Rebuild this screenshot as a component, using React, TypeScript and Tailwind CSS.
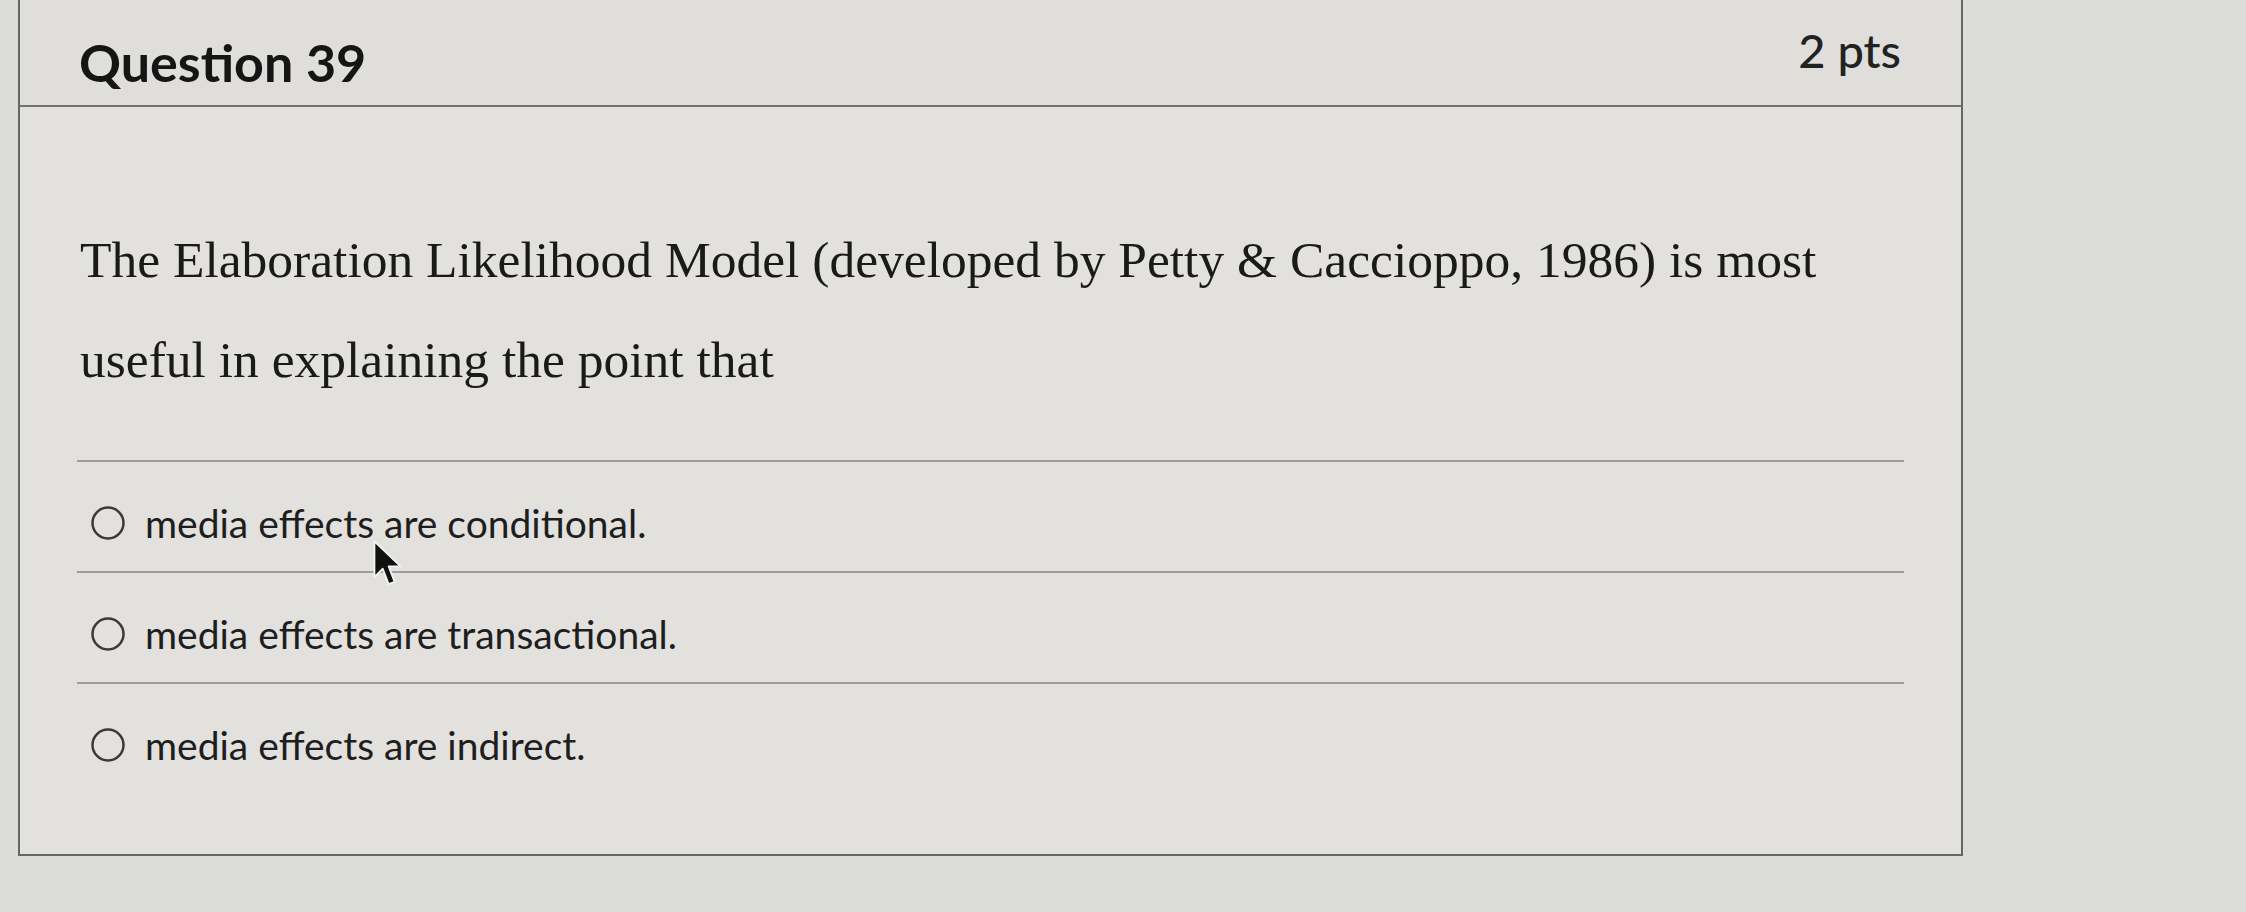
import React from "react";

const options = [
  "media effects are conditional.",
  "media effects are transactional.",
  "media effects are indirect.",
];

function Radio() {
  return (
    <svg width="36" height="36" viewBox="0 0 36 36" className="shrink-0">
      <circle cx="18" cy="18" r="15.5" fill="none" stroke="#3a3a3a" strokeWidth="2.5" />
    </svg>
  );
}

function Cursor() {
  return (
    <svg
      width="31"
      height="50"
      viewBox="0 0 13 21"
      className="absolute left-[372px] top-[539px]"
    >
      <path
        d="M1 1 L1 16 L4.5 12.5 L7 19 L9.5 18 L7 11.5 L12 11.5 Z"
        fill="#111"
        stroke="#f2f2f2"
        strokeWidth="0.8"
        strokeLinejoin="round"
      />
    </svg>
  );
}

export default function App() {
  return (
    <div className="relative min-h-screen w-full bg-[#dcdcd9] pl-[18px] font-['Lato','Liberation_Sans',sans-serif] text-[#1c1c1c]">
      <div className="w-[1945px] border-x-2 border-b-2 border-[#666] bg-[#e2e1de]">
        <header className="flex h-[107px] items-start justify-between border-b-2 border-[#727272] bg-[#dfdedb] pl-[59px] pr-[60px] pt-[22px]">
          <h1 className="mt-[9px] text-[52px] font-bold leading-[1.2] text-[#151515]">
            Question 39
          </h1>
          <span className="text-[47px] font-medium leading-[1.2] text-[#222]">2 pts</span>
        </header>

        <div className="px-[57px] pb-[62px] pt-[103px]">
          <p className="pl-[3px] font-['Liberation_Serif','Times_New_Roman',serif] text-[51.5px] leading-[100px] text-[#1a1a1a]">
            The Elaboration Likelihood Model (developed by Petty &amp; Caccioppo, 1986) is most
            <br />
            useful in explaining the point that
          </p>

          <div className="mt-[50px] border-t-2 border-[#9c9c9a]">
            {options.map((o, i) => (
              <div
                key={o}
                className={
                  "flex items-center gap-[19px] pl-[13px] pt-[38px] pb-[24px] " +
                  (i < options.length - 1 ? "border-b-2 border-[#9c9c9a]" : "")
                }
              >
                <Radio />
                <span className="text-[39px] leading-[1.2] text-[#1e1e1e]">{o}</span>
              </div>
            ))}
          </div>
        </div>
      </div>
      <Cursor />
    </div>
  );
}
